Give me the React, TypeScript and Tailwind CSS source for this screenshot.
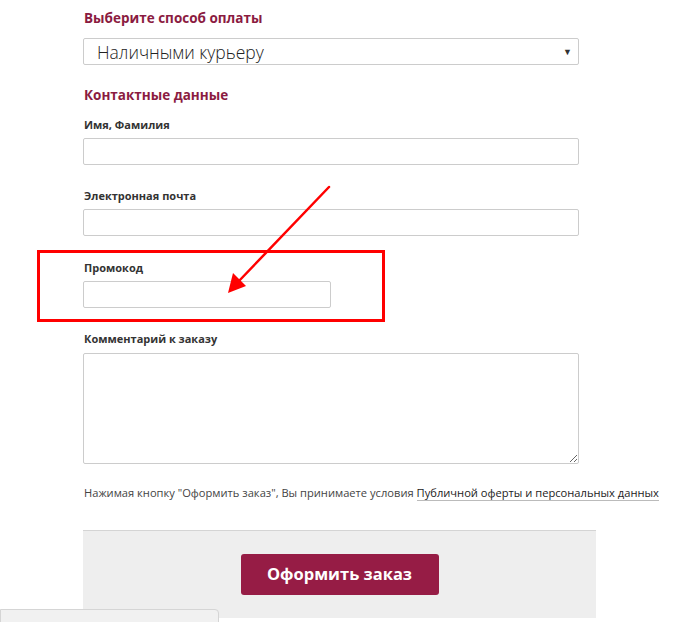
import React from 'react';

const font = { fontFamily: '"Open Sans", "Noto Sans", sans-serif' };

const Label: React.FC<{ children: React.ReactNode; className?: string }> = ({ children, className }) => (
  <div className={`text-[11px] leading-4 font-bold text-[#333] ${className || ''}`}>{children}</div>
);

const Input: React.FC<{ className?: string }> = ({ className }) => (
  <input className={`block h-[27px] border border-[#cccccc] rounded-[2px] bg-white mt-[5px] ${className || ''}`} />
);

export default function App() {
  return (
    <div className="relative w-[681px] h-[622px] bg-white overflow-hidden" style={font}>
      <div className="pl-[83px] pt-2">
        {/* Оплата */}
        <div className="text-[13.5px] leading-5 font-bold text-[#8b1b41] pl-px">Выберите способ оплаты</div>
        <div className="mt-[10px] w-[496px] h-[27px] border border-[#cccccc] rounded-[2px] flex items-center justify-between pl-[13px] pr-[6px]">
          <span className="text-[17.5px] leading-6 font-light text-[#222]">Наличными курьеру</span>
          <span className="text-[9px] text-[#333]">▼</span>
        </div>

        {/* Контакты */}
        <div className="mt-5 text-[13.5px] leading-5 font-bold text-[#8b1b41] pl-px">Контактные данные</div>

        <Label className="mt-3 pl-px">Имя, Фамилия</Label>
        <Input className="w-[496px]" />

        <Label className="mt-[23px] pl-px">Электронная почта</Label>
        <Input className="w-[496px]" />

        <Label className="mt-6 pl-px">Промокод</Label>
        <Input className="w-[248px] h-[26px]" />

        <Label className="mt-[23px] pl-px">Комментарий к заказу</Label>
        <textarea className="block mt-[6px] w-[496px] h-[111px] border border-[#cccccc] rounded-[2px] resize" />

        <div className="mt-[21px] text-[11.15px] leading-4 text-[#444] pl-px whitespace-nowrap">
          Нажимая кнопку "Оформить заказ", Вы принимаете условия{' '}
          <span className="text-[#222] border-b border-[#bbbbbb]">Публичной оферты и персональных данных</span>
        </div>

        {/* Кнопка */}
        <div className="mt-[29px] w-[513px] h-[88px] bg-[#eeeeee] border-t border-[#d4d4d4] flex justify-center pt-[23px]">
          <button className="h-[41px] w-[198px] rounded-[3px] bg-[#961c45] text-white text-[16.5px] font-bold">
            Оформить заказ
          </button>
        </div>
      </div>

      {/* нижняя плашка */}
      <div className="absolute left-0 top-[609px] w-[219px] h-[20px] bg-[#f1f1f1] border border-[#d5d5d5] rounded-tr-[4px]" />

      {/* аннотация */}
      <svg className="absolute inset-0 pointer-events-none" width="681" height="622">
        <rect x="38.5" y="251.5" width="345" height="69" fill="none" stroke="#ff0000" strokeWidth="3" />
        <line x1="329" y1="187" x2="238" y2="282" stroke="#ff0000" strokeWidth="2.5" strokeLinecap="round" />
        <polygon points="228,293 233,273 246,286" fill="#ff0000" />
      </svg>
    </div>
  );
}
